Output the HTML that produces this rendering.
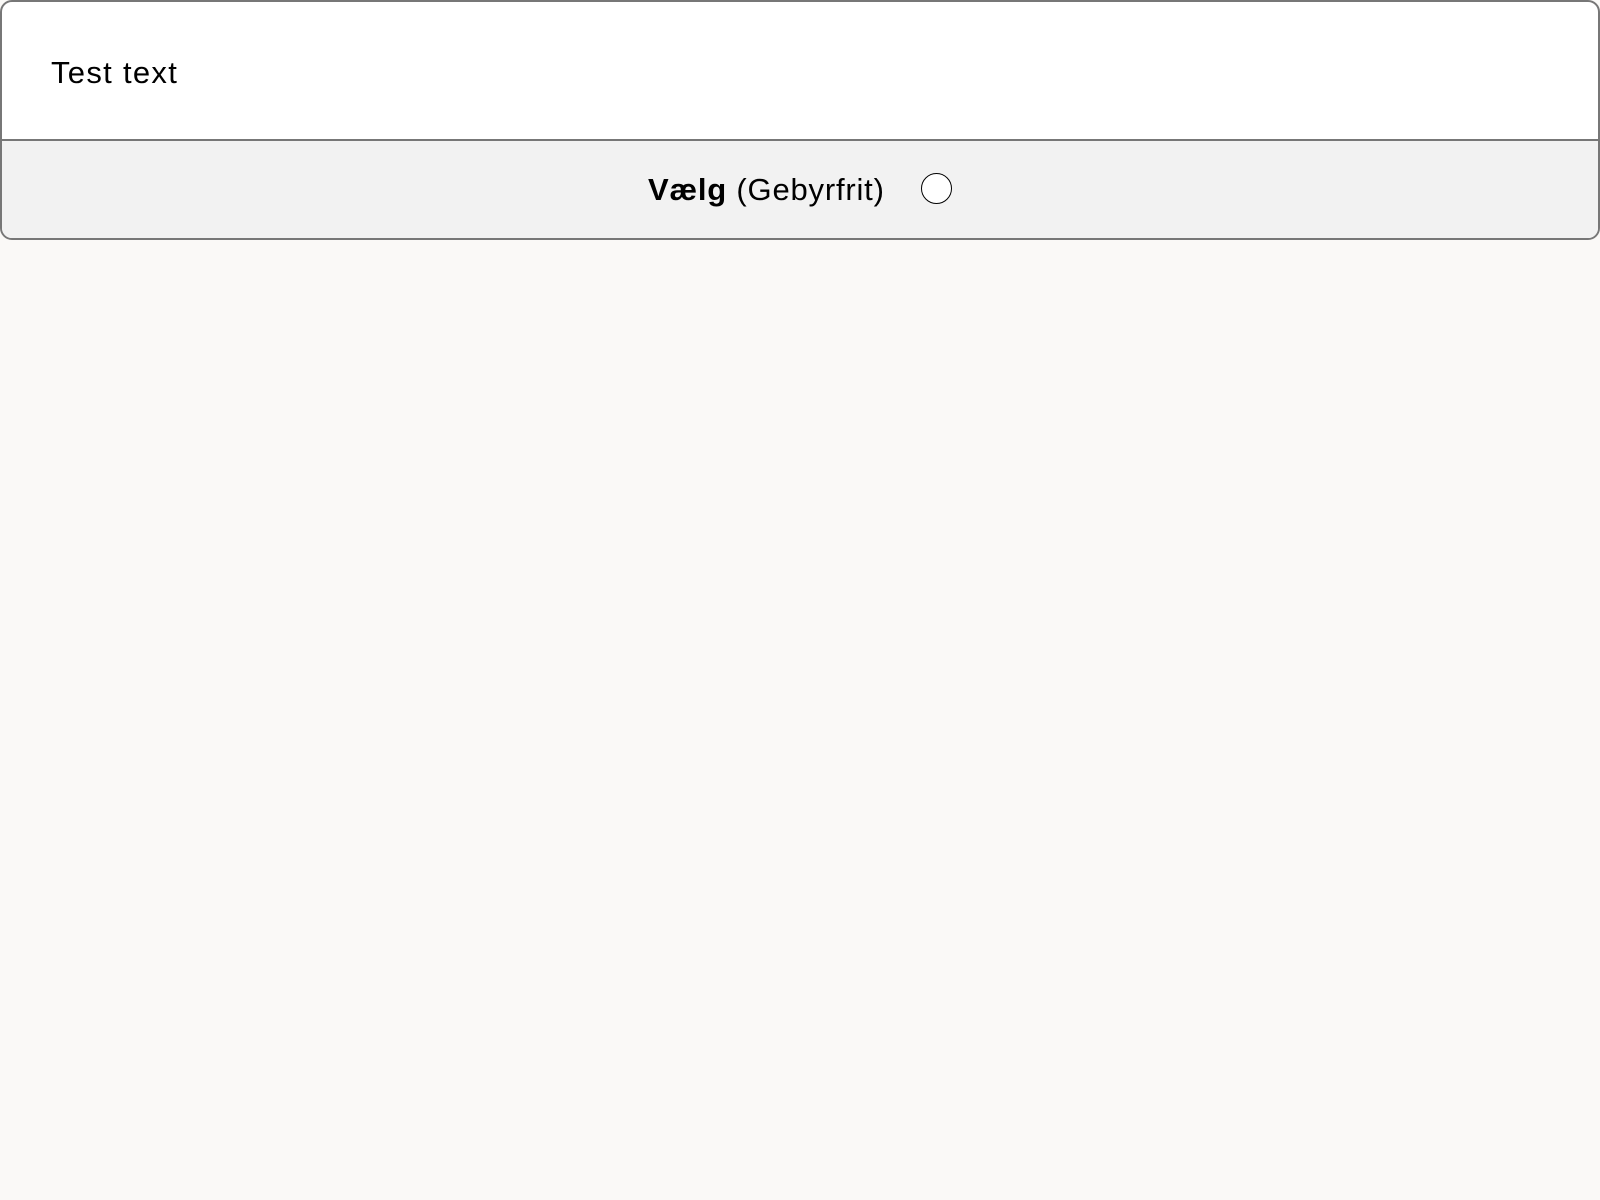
<!DOCTYPE html>
<html><head><style>
body{margin:0;background:#faf9f7;width:1600px;height:1200px;font-family:"Liberation Sans",sans-serif;}
.card{position:absolute;left:0;top:0;width:1596px;height:236px;border:2px solid #777;border-radius:12px;overflow:hidden;background:#fff;}
.top{height:139px;border-bottom:2px solid #777;box-sizing:border-box;position:relative;}
.top span{position:absolute;left:49px;top:53px;font-size:31px;letter-spacing:1.3px;color:#000;}
.bot{height:97px;background:#f2f2f2;position:relative;}
.bot .t{position:absolute;left:646px;top:31px;font-size:31px;letter-spacing:0.8px;color:#000;}
.circ{position:absolute;left:919px;top:32px;width:29px;height:29px;border:1.5px solid #000;border-radius:50%;background:#fff;}
</style></head><body>
<div class="card">
<div class="top"><span>Test text</span></div>
<div class="bot"><span class="t"><b>Vælg</b> (Gebyrfrit)</span><div class="circ"></div></div>
</div>
</body></html>
